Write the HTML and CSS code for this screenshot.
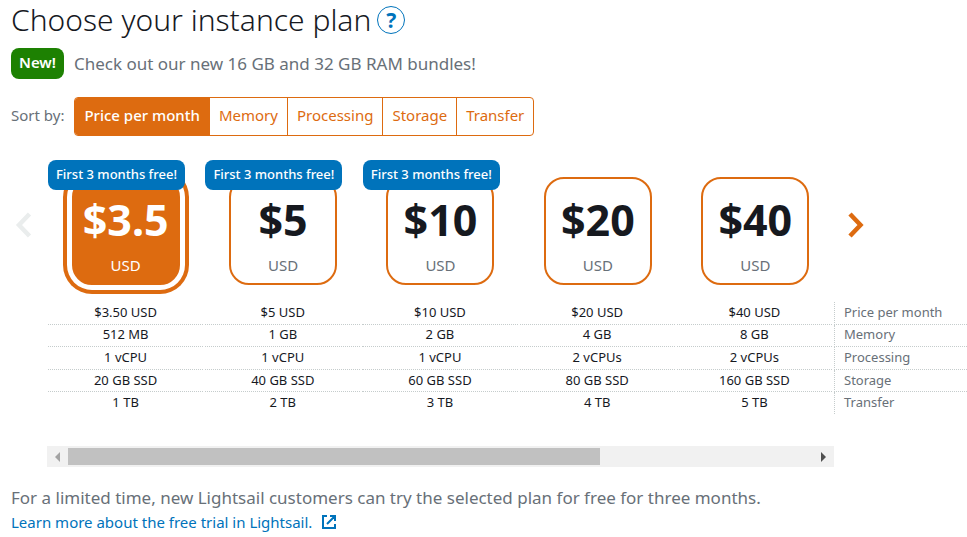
FILE: index.html
```html
<!DOCTYPE html>
<html lang="en">
<head>
    <meta charset="UTF-8">
    <meta name="viewport" content="width=device-width, initial-scale=1.0">
    <title>Choose your instance plan</title>
    <link rel="stylesheet" href="styles.css">
</head>
<body>
    <main>
        <header class="title-row">
            <h1>Choose your instance plan</h1>
            <button class="help-button" aria-label="Help">?</button>
        </header>

        <p class="announcement"><span class="new-badge">New!</span> Check out our new 16 GB and 32 GB RAM bundles!</p>

        <div class="sort-row">
            <span id="sortLabel" class="sort-label">Sort by:</span>
            <div class="sort-group" role="group" aria-labelledby="sortLabel">
                <button class="active">Price per month</button>
                <button>Memory</button>
                <button>Processing</button>
                <button>Storage</button>
                <button>Transfer</button>
            </div>
        </div>

        <section class="plan-row">
            <button class="arrow prev" aria-label="Previous plans" disabled>
                <svg width="18" height="26" viewBox="0 0 18 26"><path d="M15.500 2 5 13l10.500 11" fill="none" stroke="currentColor" stroke-width="4.500"/></svg>
            </button>
            <div class="plans">
                <div class="plan">
                    <span class="free-badge">First 3 months free!</span>
                    <button class="plan-card selected"><strong>$3.5</strong><span>USD</span></button>
                </div>
                <div class="plan">
                    <span class="free-badge">First 3 months free!</span>
                    <button class="plan-card"><strong>$5</strong><span>USD</span></button>
                </div>
                <div class="plan">
                    <span class="free-badge">First 3 months free!</span>
                    <button class="plan-card"><strong>$10</strong><span>USD</span></button>
                </div>
                <div class="plan">
                    <button class="plan-card"><strong>$20</strong><span>USD</span></button>
                </div>
                <div class="plan">
                    <button class="plan-card"><strong>$40</strong><span>USD</span></button>
                </div>
            </div>
            <button class="arrow next" aria-label="Next plans">
                <svg width="18" height="26" viewBox="0 0 18 26"><path d="M3 2l10.500 11L3 24" fill="none" stroke="currentColor" stroke-width="4.500"/></svg>
            </button>
        </section>

        <div class="specs">
            <table>
                <tr><td>$3.50 USD</td><td>$5 USD</td><td>$10 USD</td><td>$20 USD</td><td>$40 USD</td><th scope="row">Price per month</th></tr>
                <tr><td>512 MB</td><td>1 GB</td><td>2 GB</td><td>4 GB</td><td>8 GB</td><th scope="row">Memory</th></tr>
                <tr><td>1 vCPU</td><td>1 vCPU</td><td>1 vCPU</td><td>2 vCPUs</td><td>2 vCPUs</td><th scope="row">Processing</th></tr>
                <tr><td>20 GB SSD</td><td>40 GB SSD</td><td>60 GB SSD</td><td>80 GB SSD</td><td>160 GB SSD</td><th scope="row">Storage</th></tr>
                <tr><td>1 TB</td><td>2 TB</td><td>3 TB</td><td>4 TB</td><td>5 TB</td><th scope="row">Transfer</th></tr>
            </table>
        </div>

        <div class="scrollbar">
            <button aria-label="Scroll left" disabled>
                <svg width="5" height="10" viewBox="0 0 5 10"><path d="M5 0v10L0 5z" fill="currentColor"/></svg>
            </button>
            <div class="track"><div class="thumb" style="width: 71.4%"></div></div>
            <button aria-label="Scroll right">
                <svg width="5" height="10" viewBox="0 0 5 10"><path d="M0 0v10l5-5z" fill="currentColor"/></svg>
            </button>
        </div>

        <footer>
            <p>For a limited time, new Lightsail customers can try the selected plan for free for three months.</p>
            <a href="#">Learn more about the free trial in Lightsail.
                <svg width="14" height="14" viewBox="0 0 14 14" fill="none" stroke="currentColor" stroke-width="2"><path d="M5 1H1v12h12V9M8 1h5v5M13 1 5 9"/></svg>
            </a>
        </footer>
    </main>
</body>
</html>
```
FILE: styles.css
```css
* {
    box-sizing: border-box;
}
body {
    font-family: "Noto Sans", "Open Sans", sans-serif;
    font-size: 15px;
    background-color: #fff;
    color: #687078;
    margin: 0;
}
main {
    overflow: hidden;
}
button {
    font-family: inherit;
    font-size: inherit;
    padding: 0;
    border: none;
    background: none;
    cursor: pointer;
}
svg {
    display: block;
}
.title-row {
    display: flex;
    align-items: center;
    gap: 6px;
    height: 40px;
    padding-left: 11px;
}
h1 {
    margin: 0;
    font-size: 30px;
    font-weight: 300;
    line-height: 40px;
    color: #16191f;
}
.help-button {
    width: 28px;
    height: 28px;
    border: 1px solid #0073bb;
    border-radius: 50%;
    font-size: 21px;
    font-weight: bold;
    line-height: 24px;
    color: #0073bb;
}
.announcement {
    display: flex;
    align-items: center;
    gap: 10px;
    margin: 8px 0 0 11px;
    font-size: 17px;
    line-height: 28px;
}
.new-badge {
    padding: 0 8px 2px;
    border-radius: 8px;
    background-color: #1d8102;
    color: #fff;
    font-size: 15px;
    font-weight: 600;
    line-height: 29px;
}
.sort-row {
    display: flex;
    align-items: center;
    gap: 10px;
    margin: 18px 0 0 11px;
}
.sort-label {
    padding-bottom: 3px;
}
.sort-group {
    display: flex;
    border: 1px solid #dd6b10;
    border-radius: 4px;
    overflow: hidden;
}
.sort-group button {
    height: 37px;
    padding: 0 9px 3px;
    border-left: 1px solid #dd6b10;
    color: #dd6b10;
}
.sort-group .active {
    border-left: none;
    background-color: #dd6b10;
    color: #fff;
    font-weight: 500;
}
.plan-row {
    display: grid;
    grid-template-columns: 47px 1fr 133px;
    margin-top: 24px;
}
.plans {
    display: grid;
    grid-template-columns: repeat(5, 1fr);
}
.plan {
    position: relative;
    display: flex;
    justify-content: center;
    padding-top: 17px;
}
.free-badge {
    position: absolute;
    top: 0;
    left: 1px;
    padding: 0 8px 2px;
    border-radius: 8px;
    background-color: #0073bb;
    color: #fff;
    font-size: 13px;
    font-weight: 500;
    line-height: 28px;
    white-space: nowrap;
}
.plan-card {
    display: flex;
    flex-direction: column;
    align-items: center;
    width: 108px;
    height: 108px;
    border: 2px solid #dd6b10;
    border-radius: 20px;
    color: #687078;
}
.plan-card strong {
    margin-top: 11px;
    font-size: 43px;
    line-height: 59px;
    color: #16191f;
}
.plan-card span {
    line-height: 32px;
}
.plan-card.selected {
    background-color: #dd6b10;
    box-shadow: 0 0 0 5px #fff, 0 0 0 9px #dd6b10;
    color: #fff;
}
.plan-card.selected strong {
    color: #fff;
}
.arrow {
    align-self: start;
    margin-top: 52px;
    color: #dd6b10;
}
.prev {
    padding-left: 14px;
}
.next {
    padding-left: 13px;
}
.arrow:disabled {
    color: #eaeded;
    cursor: default;
}
.specs {
    margin: 17px -2px 0 46px;
}
table {
    width: 100%;
    height: 112px;
    table-layout: fixed;
    border-spacing: 2px 0;
    font-size: 13px;
    line-height: 18px;
    color: #16191f;
}
td,
th {
    padding: 0 0 2px;
    border-bottom: 1px dotted #c5cccc;
    text-align: center;
}
th {
    width: 133px;
    padding-left: 9px;
    border-left: 1px dotted #c5cccc;
    color: #687078;
    font-weight: normal;
    text-align: left;
}
tr:last-child td,
tr:last-child th {
    border-bottom: none;
}
.scrollbar {
    display: flex;
    align-items: center;
    margin: 32px 133px 0 47px;
    height: 21px;
    background-color: #f1f1f1;
    color: #505050;
}
.scrollbar button {
    display: flex;
    justify-content: center;
    align-items: center;
    width: 21px;
    height: 21px;
    color: inherit;
}
.scrollbar button:disabled {
    color: #a3a3a3;
}
.track {
    flex: 1;
}
.thumb {
    height: 17px;
    background-color: #c1c1c1;
}
footer {
    margin: 18px 11px 0;
}
footer p {
    margin: 0;
    font-size: 17px;
    line-height: 25px;
}
footer a {
    display: inline-flex;
    align-items: center;
    gap: 10px;
    line-height: 24px;
    color: #0073bb;
    text-decoration: none;
}
```
